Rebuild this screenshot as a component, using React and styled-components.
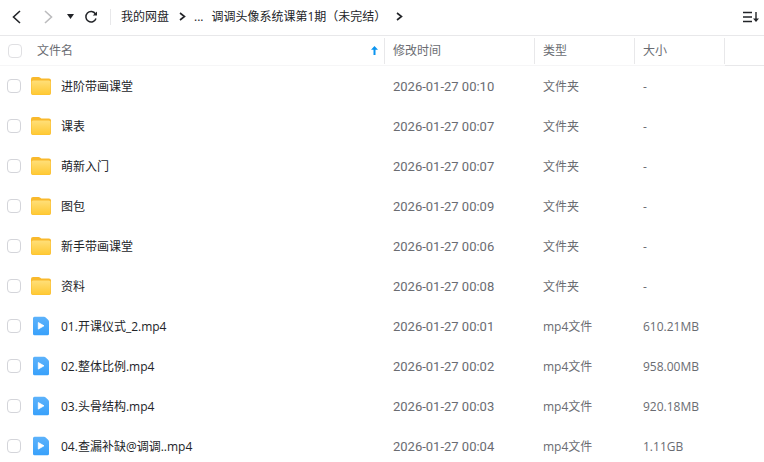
import * as React from 'react'
import styled, { createGlobalStyle } from 'styled-components'

const palette = {
  text: '#222428',
  secondary: '#6a6c72',
  border: '#e8e8ea',
  lightBorder: '#f6f6f7',
  control: '#d4d5da',
  primary: '#0a94f0',
}

const GlobalStyle = createGlobalStyle`
  body {
    margin: 0;
    background: #fff;
    color: ${palette.text};
    font-family: "Open Sans", "Noto Sans CJK SC", sans-serif;
    font-size: 12px;
    line-height: 18px;
  }
`
const Wrapper = styled.main`
  height: 100vh;
  overflow: hidden;
`
const Toolbar = styled.header`
  display: flex;
  align-items: center;
  height: 33px;
  padding: 0 5px 2px 8px;
  border-bottom: 1px solid ${palette.border};
`
const IconButton = styled.button`
  display: flex;
  align-items: center;
  justify-content: center;
  width: ${props => props.$width || 16}px;
  height: 24px;
  margin-left: ${props => props.$gap || 0}px;
  padding: 0;
  border: 0;
  background: none;
  color: ${props => props.disabled ? '#bcbcbe' : palette.text};
  cursor: pointer;
`
const Separator = styled.div`
  width: 1px;
  height: 16px;
  margin: 0 10px 0 11px;
  background: ${palette.border};
`
const Breadcrumb = styled.nav`
  display: flex;
  align-items: center;
  flex: 1;
  min-width: 0;
  white-space: nowrap;
`
const Crumb = styled.a`
  color: ${palette.text};
  text-decoration: none;
`
const CrumbArrow = styled.span`
  display: flex;
  margin: 0 8px 0 10px;
`
const Dots = styled.span`
  margin-right: 8px;
`
const Table = styled.table`
  width: 100%;
  table-layout: fixed;
  border-collapse: separate;
  border-spacing: 0;
`
const HeaderCell = styled.th`
  height: 30px;
  padding: 0;
  box-sizing: border-box;
  border-bottom: 1px solid ${props => props.$last ? palette.border : palette.lightBorder};
  color: ${palette.secondary};
  font-weight: 400;
  text-align: left;
`
const HeaderContent = styled.div`
  display: flex;
  align-items: center;
  height: 26px;
  padding: 0 6px 0 8px;
  border-right: 1px solid ${palette.border};
`
const HeaderLabel = styled.span`
  flex: 1;
`
const Row = styled.tr`
  height: 40px;
`
const Cell = styled.td`
  padding: 2px 8px 0;
  color: ${palette.secondary};
  white-space: nowrap;
`
const NameCell = styled(Cell)`
  padding: 0 8px 0 7px;
  color: ${palette.text};
`
const TimeCell = styled(Cell)`
  font-family: Roboto, sans-serif;
  font-size: 13px;
`
const FileLabel = styled.label`
  display: flex;
  align-items: center;
`
const FileName = styled.span`
  padding-top: 2px;
`
const FileIcon = styled.span`
  display: flex;
  margin: 0 9px;
`
const Checkbox = styled.input`
  appearance: none;
  flex: none;
  width: 14px;
  height: 14px;
  margin: 0 ${props => props.$header ? 15 : 0}px 0 0;
  border: 1px solid ${props => props.$header ? '#e0e0e3' : palette.control};
  border-radius: 4px;
  background: #fff;
  &:checked {
    background: ${palette.primary};
  }
`

const files = [
  { name: '进阶带画课堂', time: '2026-01-27 00:10' },
  { name: '课表', time: '2026-01-27 00:07' },
  { name: '萌新入门', time: '2026-01-27 00:07' },
  { name: '图包', time: '2026-01-27 00:09' },
  { name: '新手带画课堂', time: '2026-01-27 00:06' },
  { name: '资料', time: '2026-01-27 00:08' },
  { name: '01.开课仪式_2.mp4', time: '2026-01-27 00:01', size: '610.21MB' },
  { name: '02.整体比例.mp4', time: '2026-01-27 00:02', size: '958.00MB' },
  { name: '03.头骨结构.mp4', time: '2026-01-27 00:03', size: '920.18MB' },
  { name: '04.查漏补缺@调调..mp4', time: '2026-01-27 00:04', size: '1.11GB' },
]

const Chevron = ({ left, width, height }) => (
  <svg width={width} height={height} viewBox={`0 0 ${width} ${height}`} fill="none" stroke="currentColor" strokeWidth="1.6">
    <path d={left ? `M${width - 1} 1L1.5 ${height / 2}L${width - 1} ${height - 1}` : `M1 1L${width - 1.5} ${height / 2}L1 ${height - 1}`} />
  </svg>
)

const FolderIcon = () => (
  <svg width="22" height="20" viewBox="0 0 22 20">
    <defs>
      <linearGradient id="folder" x1="0" y1="0" x2="0" y2="1">
        <stop offset="0" stopColor="#ffdf78" />
        <stop offset="1" stopColor="#ffc933" />
      </linearGradient>
    </defs>
    <path d="M1 3Q1 1 3 1H8.500Q9.500 1 10.300 1.700L11.300 2.500H19Q21 2.500 21 4.500V17Q21 19 19 19H3Q1 19 1 17Z" fill="#f9b92c" />
    <rect x="1.500" y="4.500" width="19" height="14.200" rx="1.600" fill="url(#folder)" />
  </svg>
)

const VideoIcon = () => (
  <svg width="22" height="20" viewBox="0 0 22 20">
    <defs>
      <linearGradient id="video" x1="0" y1="0" x2="0" y2="1">
        <stop offset="0" stopColor="#5cb2fb" />
        <stop offset="1" stopColor="#38a1fb" />
      </linearGradient>
    </defs>
    <path d="M4.500 0.700H14Q15 0.700 15.700 1.400L18.300 4Q19 4.700 19 5.700V17.800Q19 19.300 17.500 19.300H4.500Q3 19.300 3 17.800V2.200Q3 0.700 4.500 0.700Z" fill="url(#video)" />
    <path d="M8.300 6.500L14 9.800L8.300 13.100Z" fill="#fff" stroke="#fff" strokeWidth="0.800" strokeLinejoin="round" />
  </svg>
)

class App extends React.Component {
  renderToolbar() {
    return (
      <Toolbar>
        <IconButton aria-label="后退"><Chevron left width={9} height={14} /></IconButton>
        <IconButton $gap={16} aria-label="前进" disabled><Chevron width={9} height={14} /></IconButton>
        <IconButton $gap={10} $width={8} aria-label="历史">
          <svg width="7" height="5" viewBox="0 0 7 5"><path d="M0 0H7L3.500 5Z" fill="currentColor" /></svg>
        </IconButton>
        <IconButton $gap={9} aria-label="刷新">
          <svg width="14" height="14" viewBox="0 0 14 14" fill="none" stroke="currentColor" strokeWidth="1.500">
            <path d="M11.500 4A5.200 5.200 0 1 0 12 8.500" />
            <path d="M13 1.500V5.500H8.800Z" fill="currentColor" stroke="none" />
          </svg>
        </IconButton>
        <Separator />
        <Breadcrumb aria-label="路径">
          <Crumb href="#root">我的网盘</Crumb>
          <CrumbArrow><Chevron width={7} height={9} /></CrumbArrow>
          <Dots>...</Dots>
          <Crumb href="#current">调调头像系统课第1期（未完结）</Crumb>
          <CrumbArrow><Chevron width={7} height={9} /></CrumbArrow>
        </Breadcrumb>
        <IconButton aria-label="排序">
          <svg width="16" height="12" viewBox="0 0 16 12" fill="none" stroke="currentColor">
            <path d="M0 1.500H9M0 6H9M0 10.500H9" strokeWidth="1.400" />
            <path d="M13 1V10" strokeWidth="1.400" />
            <path d="M10 7.500H16L13 11Z" fill="currentColor" stroke="none" />
          </svg>
        </IconButton>
      </Toolbar>
    )
  }

  renderHeader() {
    return (
      <thead>
        <tr>
          <HeaderCell>
            <HeaderContent>
              <Checkbox type="checkbox" $header aria-label="全选" />
              <HeaderLabel>文件名</HeaderLabel>
              <svg width="7" height="9" viewBox="0 0 7 9">
                <path d="M3.500 0L7 3.800H4.500V9H2.500V3.800H0Z" fill={palette.primary} />
              </svg>
            </HeaderContent>
          </HeaderCell>
          <HeaderCell><HeaderContent>修改时间</HeaderContent></HeaderCell>
          <HeaderCell><HeaderContent>类型</HeaderContent></HeaderCell>
          <HeaderCell><HeaderContent>大小</HeaderContent></HeaderCell>
          <HeaderCell as="td" $last />
        </tr>
      </thead>
    )
  }

  renderRow(file) {
    return (
      <Row key={file.name}>
        <NameCell>
          <FileLabel>
            <Checkbox type="checkbox" />
            <FileIcon>{file.size ? <VideoIcon /> : <FolderIcon />}</FileIcon>
            <FileName>{file.name}</FileName>
          </FileLabel>
        </NameCell>
        <TimeCell>{file.time}</TimeCell>
        <Cell>{file.size ? 'mp4文件' : '文件夹'}</Cell>
        <Cell>{file.size || '-'}</Cell>
        <Cell />
      </Row>
    )
  }

  render() {
    return (
      <Wrapper>
        <GlobalStyle />
        {this.renderToolbar()}
        <Table>
          <colgroup>
            <col />
            <col width="150" />
            <col width="100" />
            <col width="90" />
            <col width="39" />
          </colgroup>
          {this.renderHeader()}
          <tbody>{files.map(file => this.renderRow(file))}</tbody>
        </Table>
      </Wrapper>
    )
  }
}

export default App
